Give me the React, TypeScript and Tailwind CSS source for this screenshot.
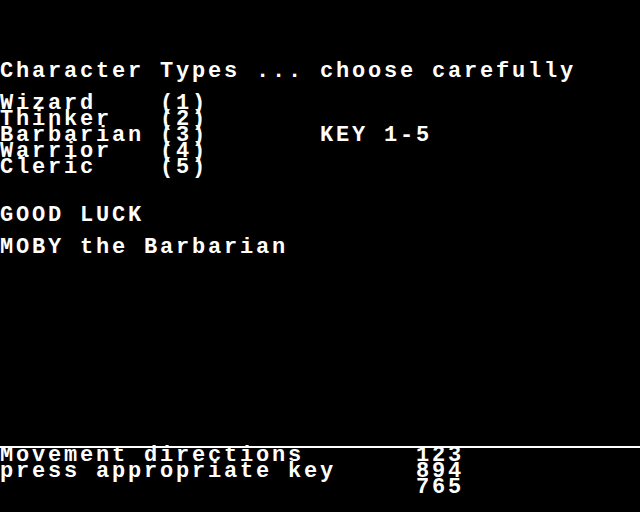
const ROWS: string[] = [
  "",
  "",
  "",
  "",
  "Character Types ... choose carefully",
  "",
  "Wizard    (1)",
  "Thinker   (2)",
  "Barbarian (3)       KEY 1-5",
  "Warrior   (4)",
  "Cleric    (5)",
  "",
  "",
  "GOOD LUCK",
  "",
  "MOBY the Barbarian",
  "",
  "",
  "",
  "",
  "",
  "",
  "",
  "",
  "",
  "",
  "",
  "",
  "Movement directions       123",
  "press appropriate key     894",
  "                          765",
  "",
];

export default function App() {
  return (
    <div className="w-[640px] h-[512px] bg-black text-white overflow-hidden flex flex-col font-['Liberation_Mono',monospace] font-bold text-[22px] leading-[16px] tracking-[2.8px]">
      {ROWS.map((row, i) => (
        <div
          key={i}
          className={
            i === 27
              ? "h-4 shrink-0 whitespace-pre border-b-2 border-white"
              : "h-4 shrink-0 whitespace-pre"
          }
        >
          {row}
        </div>
      ))}
    </div>
  );
}
